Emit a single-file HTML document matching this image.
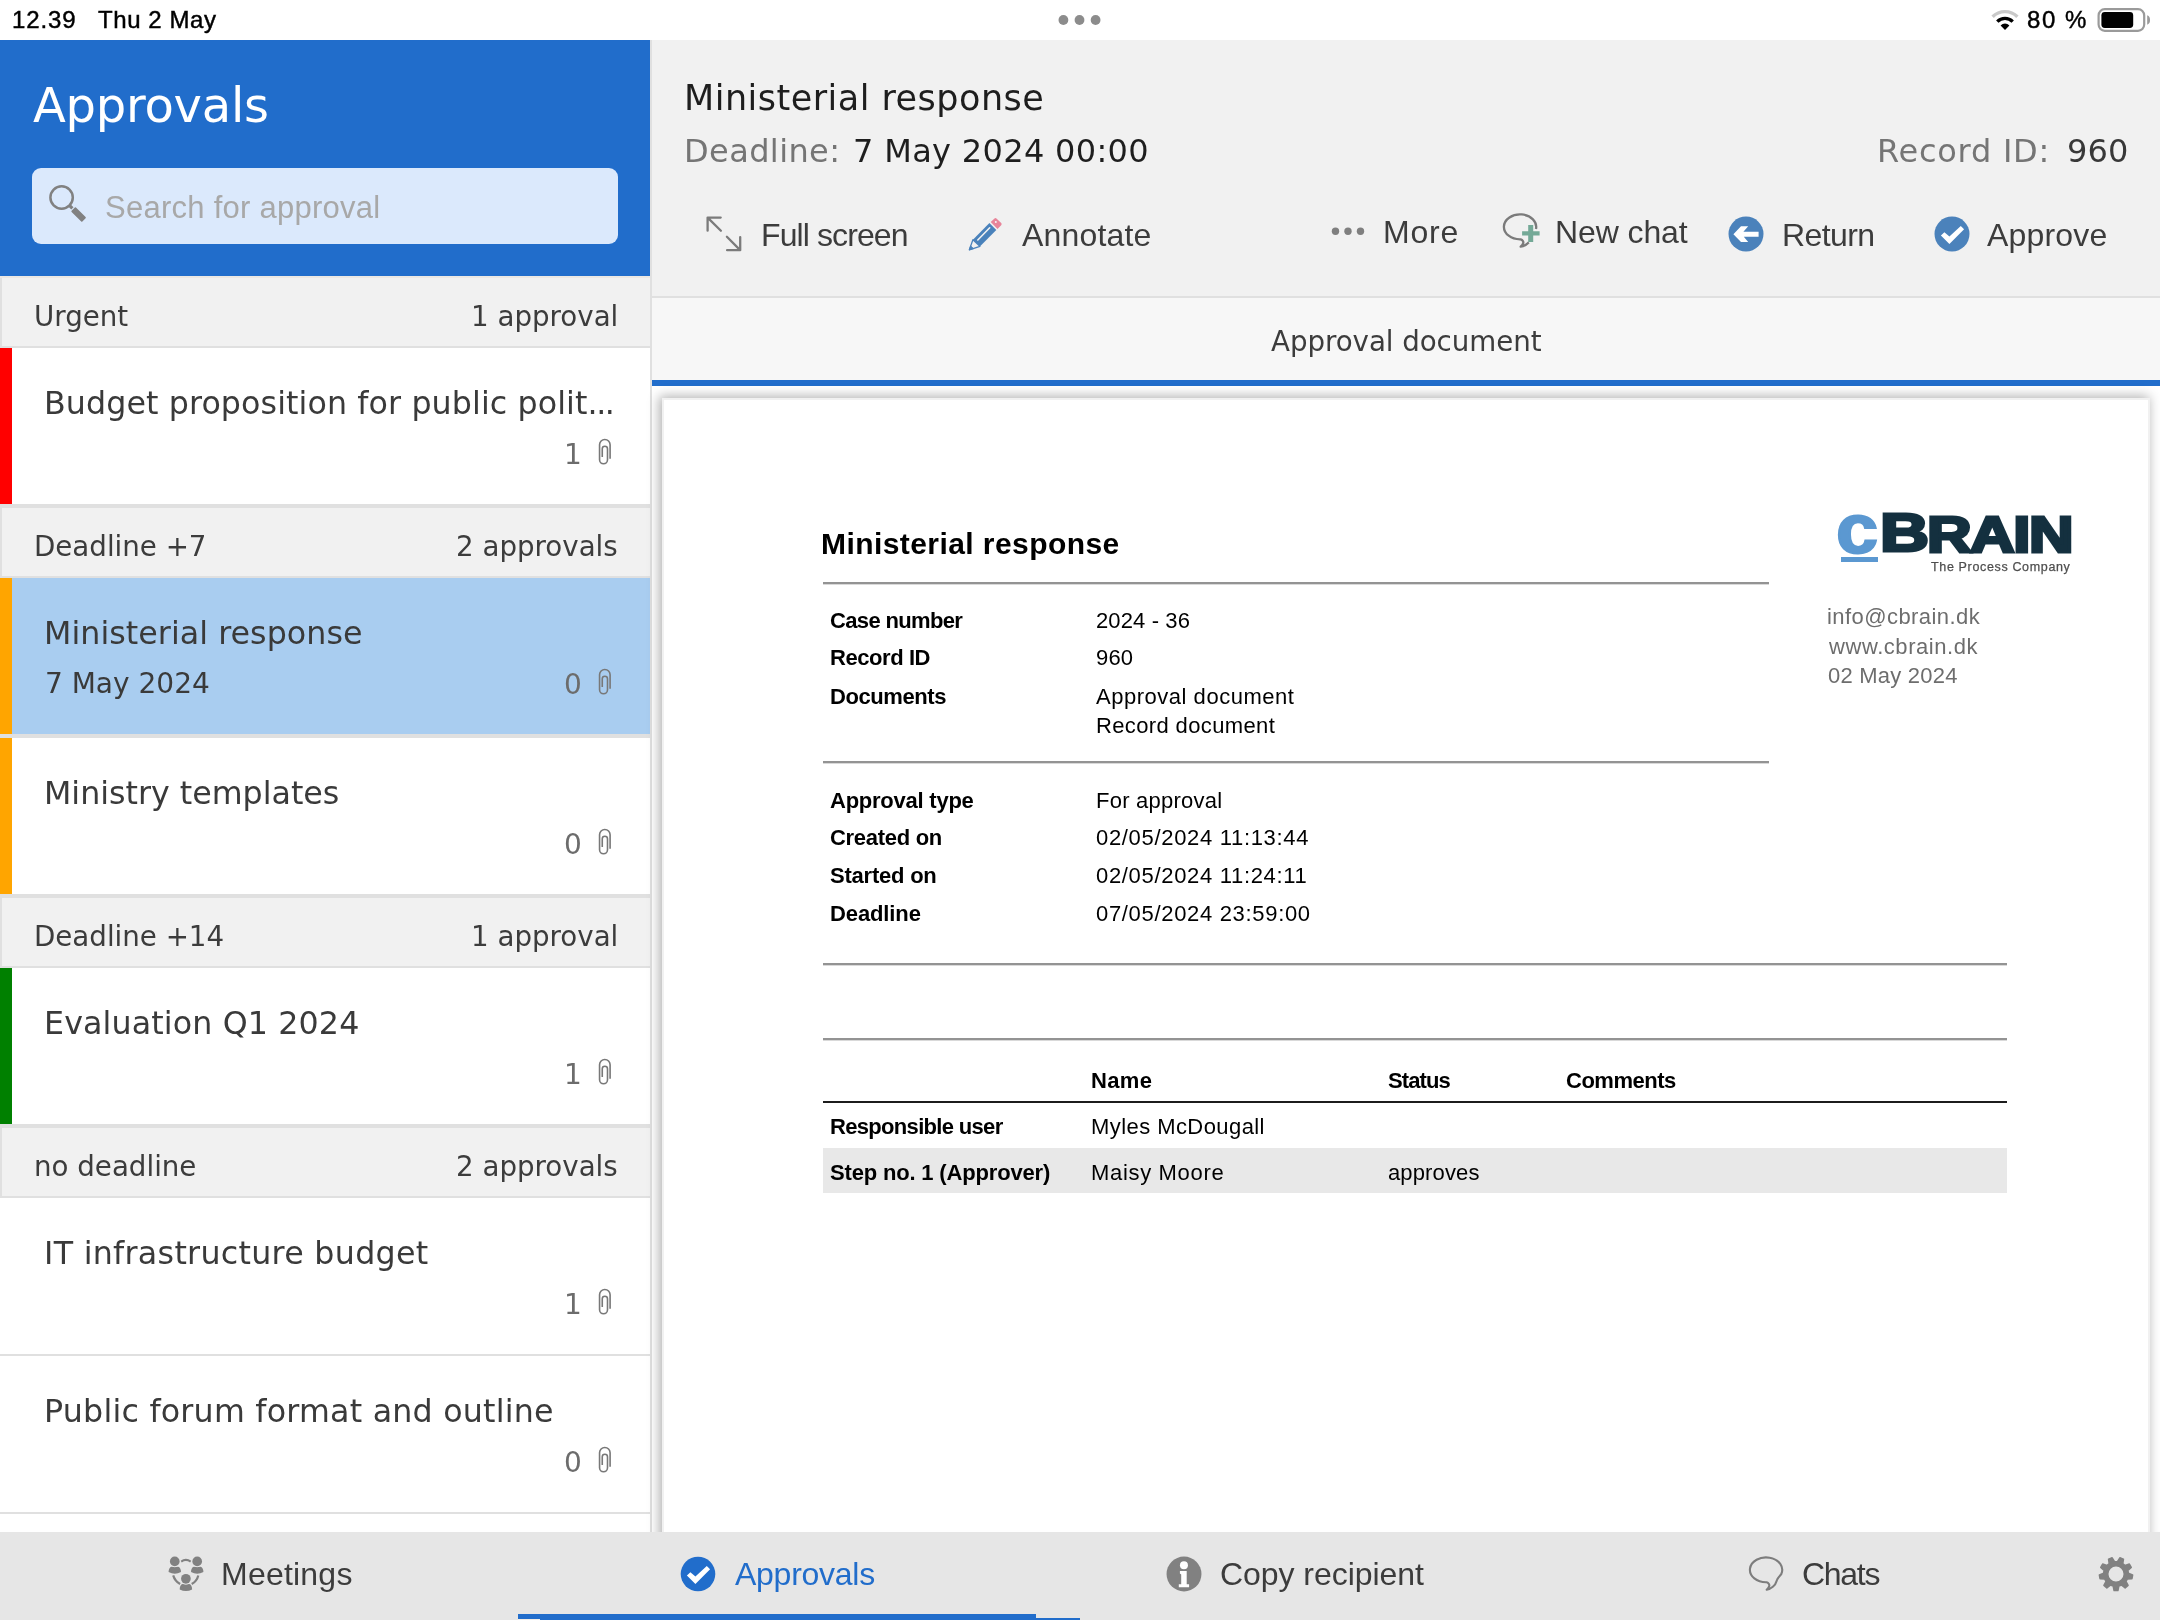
<!DOCTYPE html>
<html lang="en">
<head>
<meta charset="utf-8">
<title>Approvals</title>
<style>
*{box-sizing:border-box;margin:0;padding:0}
html,body{width:2160px;height:1620px;overflow:hidden;background:#fff}
body{position:relative;color:#3b3b3b}
.t{will-change:transform}
.b{position:absolute}
.t{position:absolute;white-space:pre}
.d{font-family:"DejaVu Sans","Liberation Sans",sans-serif}
.l{font-family:"Liberation Sans",sans-serif}
svg{position:absolute;overflow:visible}
.sb{-webkit-text-stroke:.45px #000;color:#000}
#page{position:absolute;left:662px;top:398px;width:1488px;height:1200px;background:#fff;border:2px solid #f1f1f1;box-shadow:-2px -1px 11px 1px rgba(0,0,0,.3)}
#viewer{position:absolute;left:652px;top:386px;width:1508px;height:1146px;background:#fff;overflow:hidden}
</style>
</head>
<body>
<header id="statusbar">
<span class="t l sb" style="left:12.2px;top:4.7px;font-size:24px;line-height:30px;letter-spacing:0.9px">12.39</span>
<span class="t l sb" style="left:98.0px;top:4.7px;font-size:24px;line-height:30px;letter-spacing:0.58px">Thu 2 May</span>
<span class="t l sb" style="left:2027.0px;top:4.7px;font-size:24px;line-height:30px;letter-spacing:1.55px">80 %</span>
<svg style="left:1055px;top:12px" width="50" height="16" viewBox="0 0 50 16"><circle cx="8.4" cy="8" r="4.9" fill="#8c8c8c"/><circle cx="24.5" cy="8" r="4.9" fill="#8c8c8c"/><circle cx="40.6" cy="8" r="4.9" fill="#8c8c8c"/></svg>
<svg style="left:1989px;top:6px" width="32" height="28" viewBox="0 0 32 28"><g fill="none" stroke-linecap="butt"><path d="M3.6 10.8 A17.5 17.5 0 0 1 28.4 10.8" stroke="#c9c9c9" stroke-width="3.4"/><path d="M8.3 15.6 A10.9 10.9 0 0 1 23.7 15.6" stroke="#000" stroke-width="3.4"/></g><path d="M16 24 L11.6 19.4 A6.3 6.3 0 0 1 20.4 19.4 Z" fill="#000"/></svg>
<svg style="left:2096px;top:6px" width="58" height="28" viewBox="0 0 58 28"><rect x="2.6" y="3.2" width="45.6" height="21.6" rx="6.2" fill="none" stroke="#9a9a9a" stroke-width="2.2"/><rect x="5.4" y="6" width="31.8" height="16" rx="3.4" fill="#000"/><path d="M51.2 9.3 C53.6 10.3 54 11.8 54 14 C54 16.2 53.6 17.7 51.2 18.7 Z" fill="#9a9a9a"/></svg>
</header>
<aside id="sidebar">
<div class="b" style="left:0px;top:40px;width:650px;height:236px;background:#216dcb"></div>
<span class="t d" style="left:32.7px;top:74.9px;font-size:48px;line-height:60px;letter-spacing:-0.25px;color:#fff">Approvals</span>
<div class="b" style="left:32px;top:168px;width:586px;height:75.5px;background:#dbe9fc;border-radius:9px"></div>
<span class="t l" style="left:104.5px;top:187.9px;font-size:31px;line-height:39px;letter-spacing:0.26px;color:#a8a8a8">Search for approval</span>
<svg style="left:36px;top:172px" width="60" height="60" viewBox="0 0 60 60"><circle cx="25.6" cy="25.5" r="11.2" fill="none" stroke="#818181" stroke-width="2.5"/><path d="M33.4 33.3 L36.4 36.3" stroke="#818181" stroke-width="3.2"/><rect x="-3.1" y="-7.6" width="6.2" height="15.2" rx=".8" transform="translate(42.6 42.5) rotate(-45)" fill="#818181"/></svg>
<div class="b" style="left:650px;top:40px;width:2px;height:1492px;background:#e0e0e0"></div>
<div class="b" style="left:0px;top:276px;width:650px;height:2px;background:#ebe8e4"></div>
<div class="b" style="left:0px;top:278px;width:650px;height:68px;background:#f1f1f1;border-left:2px solid #e0e0e0"></div>
<span class="t d" style="left:33.9px;top:298.9px;font-size:27.7px;line-height:35px;color:#3c3c3c">Urgent</span>
<span class="t d" style="right:1541.4px;top:298.9px;font-size:27.7px;line-height:35px;color:#3c3c3c">1 approval</span>
<div class="b" style="left:0px;top:346px;width:650px;height:2px;background:#e0e0e0"></div>
<div class="b" style="left:0px;top:348px;width:12px;height:156px;background:#ff0000"></div>
<span class="t d" style="left:44.3px;top:383.2px;font-size:31.7px;line-height:40px;letter-spacing:0.1px;color:#3a3a3a">Budget proposition for public polit<span style="letter-spacing:-1.5px">...</span></span>
<span class="t d" style="left:564.3px;top:436.6px;font-size:28px;line-height:35px;color:#6c6c6c">1</span>
<svg style="left:556px;top:430px" width="70" height="46" viewBox="0 0 70 46"><path d="M54.1 28.7V14.7a5.27 5.27 0 0 0-10.54 0V29.8a3.97 3.97 0 0 0 7.94 0V18.8a2.62 2.62 0 0 0-5.24 0V26.9" fill="none" stroke="#787878" stroke-width="1.6"/></svg>
<div class="b" style="left:0px;top:504px;width:650px;height:4px;background:#e0e0e0"></div>
<div class="b" style="left:0px;top:508px;width:650px;height:68px;background:#f1f1f1;border-left:2px solid #e0e0e0"></div>
<span class="t d" style="left:33.9px;top:528.9px;font-size:27.7px;line-height:35px;color:#3c3c3c">Deadline +7</span>
<span class="t d" style="right:1542.5px;top:528.9px;font-size:27.7px;line-height:35px;color:#3c3c3c">2 approvals</span>
<div class="b" style="left:0px;top:576px;width:650px;height:2px;background:#e0e0e0"></div>
<div class="b" style="left:0px;top:578px;width:650px;height:156px;background:#a9cdf0"></div>
<div class="b" style="left:0px;top:578px;width:12px;height:156px;background:#ffa500"></div>
<span class="t d" style="left:44.3px;top:613.2px;font-size:31.7px;line-height:40px;letter-spacing:0.05px;color:#3a3a3a">Ministerial response</span>
<span class="t d" style="left:44.5px;top:666.1px;font-size:28px;line-height:35px;color:#3a3a3a">7 May 2024</span>
<span class="t d" style="left:564.3px;top:666.6px;font-size:28px;line-height:35px;color:#6c6c6c">0</span>
<svg style="left:556px;top:660px" width="70" height="46" viewBox="0 0 70 46"><path d="M54.1 28.7V14.7a5.27 5.27 0 0 0-10.54 0V29.8a3.97 3.97 0 0 0 7.94 0V18.8a2.62 2.62 0 0 0-5.24 0V26.9" fill="none" stroke="#787878" stroke-width="1.6"/></svg>
<div class="b" style="left:0px;top:734px;width:650px;height:4px;background:#e0e0e0"></div>
<div class="b" style="left:0px;top:738px;width:12px;height:156px;background:#ffa500"></div>
<span class="t d" style="left:44.3px;top:773.2px;font-size:31.7px;line-height:40px;color:#3a3a3a">Ministry templates</span>
<span class="t d" style="left:564.3px;top:826.6px;font-size:28px;line-height:35px;color:#6c6c6c">0</span>
<svg style="left:556px;top:820px" width="70" height="46" viewBox="0 0 70 46"><path d="M54.1 28.7V14.7a5.27 5.27 0 0 0-10.54 0V29.8a3.97 3.97 0 0 0 7.94 0V18.8a2.62 2.62 0 0 0-5.24 0V26.9" fill="none" stroke="#787878" stroke-width="1.6"/></svg>
<div class="b" style="left:0px;top:894px;width:650px;height:4px;background:#e0e0e0"></div>
<div class="b" style="left:0px;top:898px;width:650px;height:68px;background:#f1f1f1;border-left:2px solid #e0e0e0"></div>
<span class="t d" style="left:33.9px;top:918.9px;font-size:27.7px;line-height:35px;color:#3c3c3c">Deadline +14</span>
<span class="t d" style="right:1541.4px;top:918.9px;font-size:27.7px;line-height:35px;color:#3c3c3c">1 approval</span>
<div class="b" style="left:0px;top:966px;width:650px;height:2px;background:#e0e0e0"></div>
<div class="b" style="left:0px;top:968px;width:12px;height:156px;background:#008000"></div>
<span class="t d" style="left:44.3px;top:1003.2px;font-size:31.7px;line-height:40px;letter-spacing:0.13px;color:#3a3a3a">Evaluation Q1 2024</span>
<span class="t d" style="left:564.3px;top:1056.6px;font-size:28px;line-height:35px;color:#6c6c6c">1</span>
<svg style="left:556px;top:1050px" width="70" height="46" viewBox="0 0 70 46"><path d="M54.1 28.7V14.7a5.27 5.27 0 0 0-10.54 0V29.8a3.97 3.97 0 0 0 7.94 0V18.8a2.62 2.62 0 0 0-5.24 0V26.9" fill="none" stroke="#787878" stroke-width="1.6"/></svg>
<div class="b" style="left:0px;top:1124px;width:650px;height:4px;background:#e0e0e0"></div>
<div class="b" style="left:0px;top:1128px;width:650px;height:68px;background:#f1f1f1;border-left:2px solid #e0e0e0"></div>
<span class="t d" style="left:33.9px;top:1148.9px;font-size:27.7px;line-height:35px;color:#3c3c3c">no deadline</span>
<span class="t d" style="right:1542.5px;top:1148.9px;font-size:27.7px;line-height:35px;color:#3c3c3c">2 approvals</span>
<div class="b" style="left:0px;top:1196px;width:650px;height:2px;background:#e0e0e0"></div>
<span class="t d" style="left:44.3px;top:1233.2px;font-size:31.7px;line-height:40px;letter-spacing:0.29px;color:#3a3a3a">IT infrastructure budget</span>
<span class="t d" style="left:564.3px;top:1286.6px;font-size:28px;line-height:35px;color:#6c6c6c">1</span>
<svg style="left:556px;top:1280px" width="70" height="46" viewBox="0 0 70 46"><path d="M54.1 28.7V14.7a5.27 5.27 0 0 0-10.54 0V29.8a3.97 3.97 0 0 0 7.94 0V18.8a2.62 2.62 0 0 0-5.24 0V26.9" fill="none" stroke="#787878" stroke-width="1.6"/></svg>
<div class="b" style="left:0px;top:1354px;width:650px;height:2px;background:#e0e0e0"></div>
<span class="t d" style="left:44.3px;top:1391.2px;font-size:31.7px;line-height:40px;letter-spacing:0.22px;color:#3a3a3a">Public forum format and outline</span>
<span class="t d" style="left:564.3px;top:1444.6px;font-size:28px;line-height:35px;color:#6c6c6c">0</span>
<svg style="left:556px;top:1438px" width="70" height="46" viewBox="0 0 70 46"><path d="M54.1 28.7V14.7a5.27 5.27 0 0 0-10.54 0V29.8a3.97 3.97 0 0 0 7.94 0V18.8a2.62 2.62 0 0 0-5.24 0V26.9" fill="none" stroke="#787878" stroke-width="1.6"/></svg>
<div class="b" style="left:0px;top:1512px;width:650px;height:2px;background:#e0e0e0"></div>
</aside>
<section id="record-header">
<div class="b" style="left:652px;top:40px;width:1508px;height:256px;background:#f1f1f1"></div>
<div class="b" style="left:652px;top:296px;width:1508px;height:2px;background:#e0e0e0"></div>
<div class="b" style="left:652px;top:298px;width:1508px;height:82px;background:#f7f7f7"></div>
<div class="b" style="left:652px;top:380px;width:1508px;height:6px;background:#216dcb"></div>
<span class="t d" style="left:683.9px;top:76.2px;font-size:35px;line-height:44px;letter-spacing:0.48px;color:#1e1e1e">Ministerial response</span>
<span class="t d" style="left:683.7px;top:130.9px;font-size:32px;line-height:40px;letter-spacing:0.4px;color:#757575">Deadline:</span>
<span class="t d" style="left:853.0px;top:130.9px;font-size:32px;line-height:40px;letter-spacing:0.33px;color:#1e1e1e">7 May 2024 00:00</span>
<span class="t d" style="left:1876.6px;top:130.9px;font-size:32px;line-height:40px;letter-spacing:0.74px;color:#757575">Record ID:</span>
<span class="t d" style="left:2066.9px;top:130.9px;font-size:32px;line-height:40px;letter-spacing:0.19px;color:#383838">960</span>
<span class="t l" style="left:760.8px;top:215.2px;font-size:32px;line-height:40px;letter-spacing:-0.9px;color:#3c3c3c">Full screen</span>
<span class="t l" style="left:1022.0px;top:215.2px;font-size:32px;line-height:40px;letter-spacing:0.18px;color:#3c3c3c">Annotate</span>
<span class="t l" style="left:1383.2px;top:212.1px;font-size:32px;line-height:40px;letter-spacing:0.8px;color:#3c3c3c">More</span>
<span class="t l" style="left:1554.5px;top:212.1px;font-size:32px;line-height:40px;letter-spacing:-0.1px;color:#3c3c3c">New chat</span>
<span class="t l" style="left:1781.5px;top:215.4px;font-size:32px;line-height:40px;letter-spacing:-0.6px;color:#3c3c3c">Return</span>
<span class="t l" style="left:1987.2px;top:215.4px;font-size:32px;line-height:40px;letter-spacing:0.17px;color:#3c3c3c">Approve</span>
<span class="t d" style="left:1270.6px;top:323.9px;font-size:27.7px;line-height:35px;letter-spacing:-0.05px;color:#3c3c3c">Approval document</span>
<svg style="left:696px;top:206px" width="60" height="56" viewBox="0 0 60 56"><g fill="none" stroke="#7b7b7b" stroke-width="2.3" stroke-linecap="round" stroke-linejoin="round"><path d="M11.6 24.7V11.6H24.7M11.9 11.9L24.9 24.8"/><path d="M44.2 31.1V44.2H31.1M43.9 43.9L30.9 30.8"/></g></svg>
<svg style="left:956px;top:206px" width="60" height="56" viewBox="0 0 60 56"><path d="M33.4 16.9L40.3 23.9 23.9 40.4 16.9 33.7Z" fill="#4a82bb"/><path d="M21.8 34L33.7 21.8" stroke="#f1f1f1" stroke-width="1.6" stroke-linecap="round"/><path d="M16.9 33.7L23.9 40.4 13.3 43.9Z" fill="#f1f1f1" stroke="#4a82bb" stroke-width="1.3" stroke-linejoin="round"/><path d="M13.3 43.9L14.6 39.9 17.4 42.6Z" fill="#4a82bb" stroke="#4a82bb" stroke-width="1"/><path d="M34.7 15.9L38.5 12.6Q39.6 11.6 40.7 12.7L45.2 17.1Q46.2 18.2 45.2 19.3L41.5 23Z" fill="#e8859a"/><circle cx="39.8" cy="15.9" r="1" fill="#f4f4f4"/></svg>
<svg style="left:1320px;top:220px" width="56" height="24" viewBox="0 0 56 24"><circle cx="15.5" cy="11.2" r="3.7" fill="#7f7f7f"/><circle cx="28" cy="11.2" r="3.7" fill="#7f7f7f"/><circle cx="40.5" cy="11.2" r="3.7" fill="#7f7f7f"/></svg>
<svg style="left:1492px;top:203px" width="60" height="56" viewBox="0 0 60 56"><path d="M43.97 26A16.15 12.45 0 1 0 28.7 36.3C30.5 36.8 32 39 31 40.5Q30.5 42 28.7 43.7C31.5 43.3 34.5 41.5 36.8 39.3" fill="none" stroke="#7b7b7b" stroke-width="2.3" stroke-linejoin="round"/><path d="M36.2 22.1h5v6.2h6.4v4.3h-6.4v6.3h-5v-6.3h-6.1v-4.3h6.1z" fill="#74a997"/></svg>
<svg style="left:1726.1px;top:213.8px" width="40" height="40" viewBox="-20 -20 40 40"><circle r="17.5" fill="#4b82bb"/><polygon points="-12.6,0.2 -5.0,-7.7 2.2,-7.7 -2.6,-2.3 12.6,-2.3 12.6,2.7 -2.2,2.7 2.2,8.0 -5.0,8.0" fill="#fff"/></svg>
<svg style="left:1932.1px;top:213.8px" width="40" height="40" viewBox="-20 -20 40 40"><circle r="17.5" fill="#4b82bb"/><polygon points="8.8,-8.1 12.1,-4.7 -2.6,10.1 -11.1,1.5 -7.6,-1.8 -2.6,2.5" fill="#fff"/></svg>
</section>
<main id="document">
<div id="viewer"></div><div id="page"></div>
<span class="t l" style="left:821.0px;top:524.8px;font-size:30px;line-height:38px;letter-spacing:0.43px;color:#000;font-weight:700">Ministerial response</span>
<div class="b" style="left:823px;top:581.5px;width:946px;height:2px;background:#939393"></div><div class="b" style="left:823px;top:583.5px;width:946px;height:1px;background:#d9d9d9"></div>
<div class="b" style="left:823px;top:761.2px;width:946px;height:2px;background:#939393"></div><div class="b" style="left:823px;top:763.2px;width:946px;height:1px;background:#d9d9d9"></div>
<div class="b" style="left:823px;top:963.4px;width:1184px;height:2px;background:#939393"></div><div class="b" style="left:823px;top:965.4px;width:1184px;height:1px;background:#d9d9d9"></div>
<div class="b" style="left:823px;top:1037.9px;width:1184px;height:2px;background:#939393"></div><div class="b" style="left:823px;top:1039.9px;width:1184px;height:1px;background:#d9d9d9"></div>
<div class="b" style="left:823px;top:1148.3px;width:1184px;height:44.5px;background:#e8e8e8"></div>
<div class="b" style="left:823px;top:1101.4px;width:1184px;height:2px;background:#1c1c1c"></div>
<span class="t l" style="left:830.0px;top:607.4px;font-size:22px;line-height:28px;letter-spacing:-0.65px;color:#000;font-weight:700">Case number</span>
<span class="t l" style="left:1096.0px;top:607.4px;font-size:22px;line-height:28px;letter-spacing:0.12px;color:#000">2024 - 36</span>
<span class="t l" style="left:830.0px;top:644.4px;font-size:22px;line-height:28px;letter-spacing:-0.43px;color:#000;font-weight:700">Record ID</span>
<span class="t l" style="left:1096.0px;top:644.4px;font-size:22px;line-height:28px;letter-spacing:0.16px;color:#000">960</span>
<span class="t l" style="left:830.0px;top:682.7px;font-size:22px;line-height:28px;letter-spacing:-0.42px;color:#000;font-weight:700">Documents</span>
<span class="t l" style="left:1096.0px;top:682.7px;font-size:22px;line-height:28px;letter-spacing:0.52px;color:#000">Approval document</span>
<span class="t l" style="left:1096.0px;top:712.4px;font-size:22px;line-height:28px;letter-spacing:0.37px;color:#000">Record document</span>
<span class="t l" style="left:830.0px;top:786.6px;font-size:22px;line-height:28px;letter-spacing:-0.24px;color:#000;font-weight:700">Approval type</span>
<span class="t l" style="left:1096.0px;top:786.6px;font-size:22px;line-height:28px;letter-spacing:0.23px;color:#000">For approval</span>
<span class="t l" style="left:830.0px;top:824.1px;font-size:22px;line-height:28px;letter-spacing:-0.29px;color:#000;font-weight:700">Created on</span>
<span class="t l" style="left:1096.0px;top:824.1px;font-size:22px;line-height:28px;letter-spacing:0.68px;color:#000">02/05/2024 11:13:44</span>
<span class="t l" style="left:830.0px;top:862.1px;font-size:22px;line-height:28px;letter-spacing:-0.22px;color:#000;font-weight:700">Started on</span>
<span class="t l" style="left:1096.0px;top:862.1px;font-size:22px;line-height:28px;letter-spacing:0.68px;color:#000">02/05/2024 11:24:11</span>
<span class="t l" style="left:830.0px;top:899.6px;font-size:22px;line-height:28px;letter-spacing:-0.11px;color:#000;font-weight:700">Deadline</span>
<span class="t l" style="left:1096.0px;top:899.6px;font-size:22px;line-height:28px;letter-spacing:0.68px;color:#000">07/05/2024 23:59:00</span>
<span class="t l" style="left:1090.7px;top:1066.5px;font-size:22px;line-height:28px;letter-spacing:0.34px;color:#000;font-weight:700">Name</span>
<span class="t l" style="left:1387.5px;top:1066.5px;font-size:22px;line-height:28px;letter-spacing:-0.88px;color:#000;font-weight:700">Status</span>
<span class="t l" style="left:1565.8px;top:1066.5px;font-size:22px;line-height:28px;letter-spacing:-0.48px;color:#000;font-weight:700">Comments</span>
<span class="t l" style="left:830.0px;top:1113.4px;font-size:22px;line-height:28px;letter-spacing:-0.68px;color:#000;font-weight:700">Responsible user</span>
<span class="t l" style="left:1090.7px;top:1113.4px;font-size:22px;line-height:28px;letter-spacing:0.43px;color:#000">Myles McDougall</span>
<span class="t l" style="left:830.0px;top:1158.7px;font-size:22px;line-height:28px;letter-spacing:-0.17px;color:#000;font-weight:700">Step no. 1 (Approver)</span>
<span class="t l" style="left:1090.7px;top:1158.7px;font-size:22px;line-height:28px;letter-spacing:0.67px;color:#000">Maisy Moore</span>
<span class="t l" style="left:1387.5px;top:1158.7px;font-size:22px;line-height:28px;letter-spacing:0.13px;color:#000">approves</span>
<span class="t l" style="left:1836.4px;top:486.3px;font-size:69.5px;line-height:87px;font-weight:700;color:#5b98d1;-webkit-text-stroke:2px #5b98d1;letter-spacing:0px;transform:scaleX(1.09);transform-origin:0 50%">c</span>
<div class="b" style="left:1841.2px;top:557.3px;width:36.6px;height:4.3px;background:#5b98d1"></div>
<span class="t l" style="left:1879.6px;top:499.4px;font-size:54.3px;line-height:68px;font-weight:700;color:#14303f;-webkit-text-stroke:3px #14303f;letter-spacing:0px;transform:scaleX(1.25);transform-origin:0 50%">B</span>
<span class="t l" style="left:1926.6px;top:502.5px;font-size:50.4px;line-height:63px;font-weight:700;color:#14303f;-webkit-text-stroke:3px #14303f;letter-spacing:-1.2px;transform:scaleX(1.225);transform-origin:0 50%">RAIN</span>
<span class="t l" style="left:1931.0px;top:558.9px;font-size:12.5px;line-height:16px;letter-spacing:0.65px;color:#4f4f4f;-webkit-text-stroke:.25px #4f4f4f">The Process Company</span>
<span class="t l" style="left:1827.4px;top:603.4px;font-size:22px;line-height:28px;letter-spacing:0.43px;color:#6d6d6d">info@cbrain.dk</span>
<span class="t l" style="left:1829.4px;top:632.6px;font-size:22px;line-height:28px;letter-spacing:0.56px;color:#6d6d6d">www.cbrain.dk</span>
<span class="t l" style="left:1828.4px;top:662.0px;font-size:22px;line-height:28px;letter-spacing:0.23px;color:#6d6d6d">02 May 2024</span>
</main>
<nav id="tabbar">
<div class="b" style="left:0px;top:1532px;width:2160px;height:88px;background:#e6e6e6"></div>
<div class="b" style="left:518px;top:1614px;width:518px;height:6px;background:#216dcb"></div>
<div class="b" style="left:540px;top:1618px;width:540px;height:2px;background:#216dcb"></div>
<div class="b" style="left:518px;top:1619px;width:22px;height:1px;background:#f1ede8"></div>
<span class="t l" style="left:220.9px;top:1554.4px;font-size:32px;line-height:40px;letter-spacing:0.22px;color:#3c3c3c">Meetings</span>
<span class="t l" style="left:734.8px;top:1554.2px;font-size:32px;line-height:40px;letter-spacing:-0.26px;color:#216dcb">Approvals</span>
<span class="t l" style="left:1220.0px;top:1554.2px;font-size:32px;line-height:40px;letter-spacing:-0.05px;color:#3c3c3c">Copy recipient</span>
<span class="t l" style="left:1801.5px;top:1553.9px;font-size:32px;line-height:40px;letter-spacing:-1.3px;color:#3c3c3c">Chats</span>
<svg style="left:158px;top:1546px" width="56" height="56" viewBox="0 0 56 56"><g fill="none" stroke="#818181" stroke-width="2.2"><path d="M23.2 15.6Q27.9 12.2 32.7 15.6"/><path d="M15.2 29.4Q16.8 35 22.1 38"/><path d="M40.3 29.4Q38.9 35 33.7 38"/></g><path d="M10.6 26.1C10.6 23.1 11.8 20.9 13.4 20.7H20.2C21.8 20.9 23.0 23.1 23.0 26.1Q16.8 29.3 10.6 26.1Z" fill="#818181"/><circle cx="16.76" cy="15.38" r="5.9" fill="#e6e6e6"/><circle cx="16.76" cy="15.38" r="4.85" fill="#818181"/><path d="M33.0 26.1C33.0 23.1 34.2 20.9 35.8 20.7H42.6C44.2 20.9 45.4 23.1 45.4 26.1Q39.2 29.3 33.0 26.1Z" fill="#818181"/><circle cx="39.2" cy="15.38" r="5.9" fill="#e6e6e6"/><circle cx="39.2" cy="15.38" r="4.85" fill="#818181"/><path d="M21.7 43.5C21.7 40.5 22.9 38.3 24.5 38.1H31.3C32.9 38.3 34.1 40.5 34.1 43.5Q27.9 46.7 21.7 43.5Z" fill="#818181"/><circle cx="27.9" cy="32.8" r="5.9" fill="#e6e6e6"/><circle cx="27.9" cy="32.8" r="4.85" fill="#818181"/></svg>
<svg style="left:678.0px;top:1554.0px" width="40" height="40" viewBox="-20 -20 40 40"><circle r="17.3" fill="#216dcb"/><polygon points="8.8,-8.1 12.1,-4.7 -2.6,10.1 -11.1,1.5 -7.6,-1.8 -2.6,2.5" fill="#fff"/></svg>
<svg style="left:1164.1px;top:1553.8px" width="40" height="40" viewBox="-20 -20 40 40"><circle r="17.45" fill="#818181"/><polygon points="-4.1,-2.9 2.7,-2.9 2.7,10.3 5.1,10.3 5.1,13.2 -5.2,13.2 -5.2,10.3 -2.8,10.3 -2.8,0.6 -4.1,-0.6" fill="#fff"/><circle cx="-.06" cy="-8.67" r="4" fill="#fff"/></svg>
<svg style="left:1738px;top:1546px" width="56" height="56" viewBox="0 0 56 56"><path d="M43.2 28.2A16.15 12.45 0 1 0 28.7 36.3C30.5 36.8 32 39 31 40.5Q30.5 42 28.7 43.7C33 43 37.5 39.5 38.6 35C39.2 32.5 41 30.5 43.2 28.2Z" fill="none" stroke="#7d7d7d" stroke-width="2.1" stroke-linejoin="round"/></svg>
<svg style="left:2088px;top:1546px" width="56" height="56" viewBox="-28 -28 56 56"><path d="M2.79 12.08L1.88 16.49L-1.88 16.49L-2.79 12.08L-5.63 11.05L-9.16 13.84L-12.04 11.43L-9.90 7.46L-11.41 4.85L-15.92 4.71L-16.57 1.01L-12.38 -0.65L-11.86 -3.63L-15.22 -6.62L-13.34 -9.87L-9.07 -8.46L-6.75 -10.40L-7.41 -14.86L-3.88 -16.14L-1.51 -12.31L1.51 -12.31L3.88 -16.14L7.41 -14.86L6.75 -10.40L9.07 -8.46L13.34 -9.87L15.22 -6.62L11.86 -3.63L12.38 -0.65L16.57 1.01L15.92 4.71L11.41 4.85L9.90 7.46L12.04 11.43L9.16 13.84L5.63 11.05ZM8.3 0A8.3 8.3 0 1 0 -8.3 0A8.3 8.3 0 1 0 8.3 0Z" fill="#818181" fill-rule="evenodd" stroke="#818181" stroke-width="1.6" stroke-linejoin="round"/></svg>
</nav>
</body>
</html>
